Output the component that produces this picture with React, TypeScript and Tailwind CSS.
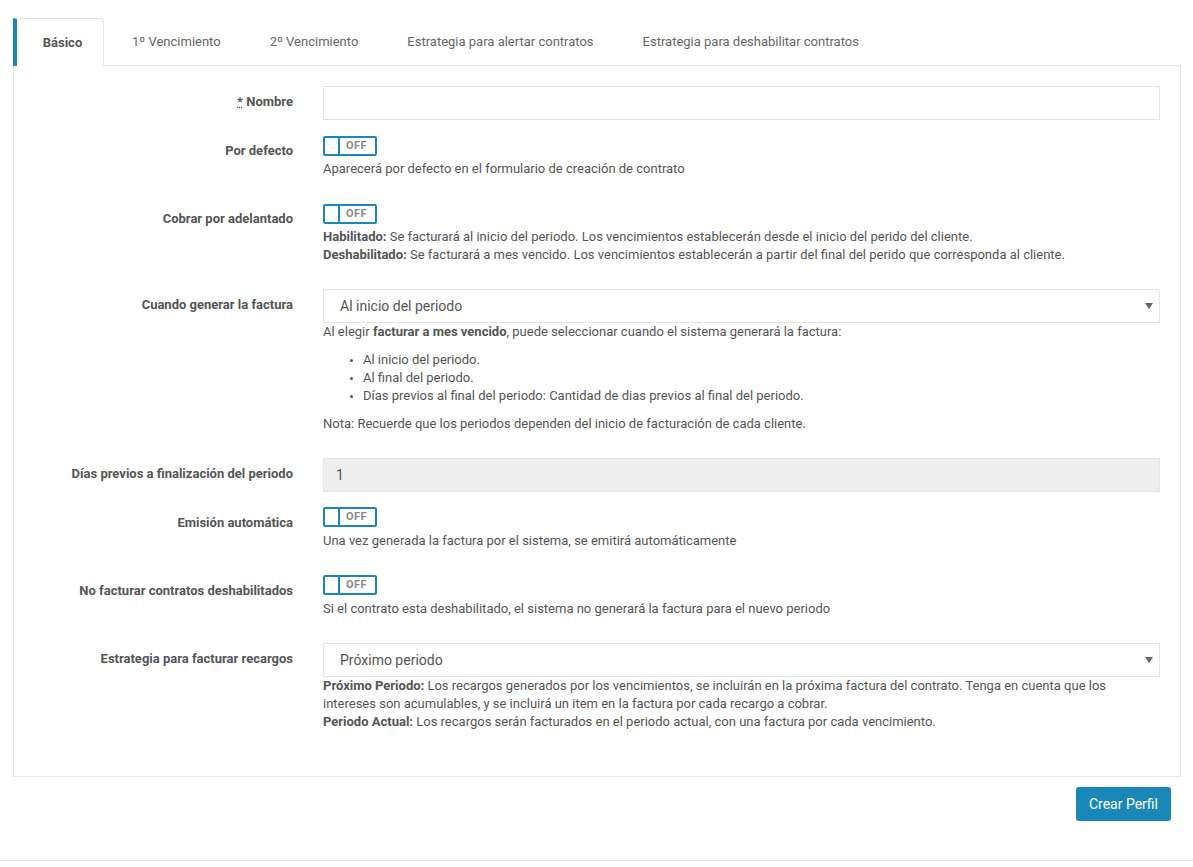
import React from "react";

const TABS = [
  "1º Vencimiento",
  "2º Vencimiento",
  "Estrategia para alertar contratos",
  "Estrategia para deshabilitar contratos",
];

const Toggle = () => (
  <div className="flex h-[20px] w-[54px] items-stretch rounded-[2px] border-2 border-[#1b87b7] bg-white">
    <span className="w-[15px] border-r-2 border-[#1b87b7]" />
    <span className="flex flex-1 items-center justify-center pb-[1px] pr-[2px] text-[11px] font-bold leading-none tracking-[0.5px] text-[#8a8a8a]">
      OFF
    </span>
  </div>
);

const Row = ({
  label,
  children,
  className = "",
}: {
  label: React.ReactNode;
  children: React.ReactNode;
  className?: string;
}) => (
  <div className={`flex ${className}`}>
    <label className="w-[279px] shrink-0 pt-[7px] text-right text-[13px] font-bold leading-[18px] text-[#555]">
      {label}
    </label>
    <div className="ml-[30px] mr-[20px] flex-1">{children}</div>
  </div>
);

const Select = ({ value }: { value: string }) => (
  <div className="flex h-[34px] items-center justify-between border border-[#e5e5e5] bg-white pl-[16px] pr-[6px] text-[14px] text-[#555]">
    <span>{value}</span>
    <svg width="8" height="6" viewBox="0 0 8 6" className="fill-[#666]">
      <path d="M0 0 H8 L4 6 Z" />
    </svg>
  </div>
);

const Help = ({ children, className = "" }: { children: React.ReactNode; className?: string }) => (
  <div className={`text-[13px] leading-[18px] text-[#555] ${className}`}>{children}</div>
);

export default function App() {
  return (
    <div className="min-h-[867px] bg-white font-['Roboto',sans-serif] text-[13px] text-[#555]">
      <div className="pl-[13px] pr-[12px] pt-[18px]">
        {/* tabs */}
        <div className="flex border-b border-[#e6e6e6]">
          <div className="-mb-px flex h-[48px] w-[91px] items-center justify-center rounded-tr-[3px] border-l-4 border-r border-t border-l-[#1b87b7] border-r-[#e6e6e6] border-t-[#e6e6e6] bg-white pl-[5px] text-[13px] font-bold text-[#555]">
            Básico
          </div>
          <div className="ml-[3.5px] flex">
            {TABS.map((t) => (
              <div key={t} className="flex h-[47px] items-center px-[24.5px] text-[13px] text-[#666]">
                {t}
              </div>
            ))}
          </div>
        </div>

        {/* panel */}
        <div className="border-x border-b border-[#e6e6e6] pb-[20px] pt-[20px]">
          <Row
            label={
              <>
                <abbr className="underline decoration-dotted">*</abbr> Nombre
              </>
            }
            className="mb-[15px]"
          >
            <div className="h-[34px] border border-[#e5e5e5] bg-white" />
          </Row>

          <Row label="Por defecto" className="mb-[25px]">
            <div className="pt-[1px]">
              <Toggle />
            </div>
            <Help className="mt-[4px]">
              Aparecerá por defecto en el formulario de creación de contrato
            </Help>
          </Row>

          <Row label="Cobrar por adelantado" className="mb-[25px]">
            <div className="pt-[1px]">
              <Toggle />
            </div>
            <Help className="mt-[4px]">
              <p>
                <b>Habilitado:</b> Se facturará al inicio del periodo. Los vencimientos establecerán
                desde el inicio del perido del cliente.
              </p>
              <p>
                <b>Deshabilitado:</b> Se facturará a mes vencido. Los vencimientos establecerán a
                partir del final del perido que corresponda al cliente.
              </p>
            </Help>
          </Row>

          <Row label="Cuando generar la factura" className="mb-[25px]">
            <Select value="Al inicio del periodo" />
            <Help>
              <p>
                Al elegir <b>facturar a mes vencido</b>, puede seleccionar cuando el sistema
                generará la factura:
              </p>
              <ul className="my-[10px] list-disc pl-[40px] marker:text-[10px]">
                <li>Al inicio del periodo.</li>
                <li>Al final del periodo.</li>
                <li>Días previos al final del periodo: Cantidad de dias previos al final del periodo.</li>
              </ul>
              <p>Nota: Recuerde que los periodos dependen del inicio de facturación de cada cliente.</p>
            </Help>
          </Row>

          <Row label="Días previos a finalización del periodo" className="mb-[15px]">
            <div className="flex h-[34px] items-center border border-[#e5e5e5] bg-[#eeeeee] px-[12px] text-[14px] text-[#555]">
              1
            </div>
          </Row>

          <Row label="Emisión automática" className="mb-[25px]">
            <Toggle />
            <Help className="mt-[5px]">
              Una vez generada la factura por el sistema, se emitirá automáticamente
            </Help>
          </Row>

          <Row label="No facturar contratos deshabilitados" className="mb-[25px]">
            <Toggle />
            <Help className="mt-[5px]">
              Si el contrato esta deshabilitado, el sistema no generará la factura para el nuevo
              periodo
            </Help>
          </Row>

          <Row label="Estrategia para facturar recargos" className="mb-[25px]">
            <Select value="Próximo periodo" />
            <Help>
              <p>
                <b>Próximo Periodo:</b> Los recargos generados por los vencimientos, se incluirán en
                la próxima factura del contrato. Tenga en cuenta que los intereses son acumulables, y
                se incluirá un item en la factura por cada recargo a cobrar.
              </p>
              <p>
                <b>Periodo Actual:</b> Los recargos serán facturados en el periodo actual, con una
                factura por cada vencimiento.
              </p>
            </Help>
          </Row>
        </div>

        <div className="mt-[10px] flex justify-end pr-[10px]">
          <button className="h-[34px] rounded-[3px] bg-[#1a87b9] px-[13px] text-[14px] text-white">
            Crear Perfil
          </button>
        </div>
      </div>
      <div className="mt-[39px] border-t border-[#e6e6e6]" />
    </div>
  );
}
